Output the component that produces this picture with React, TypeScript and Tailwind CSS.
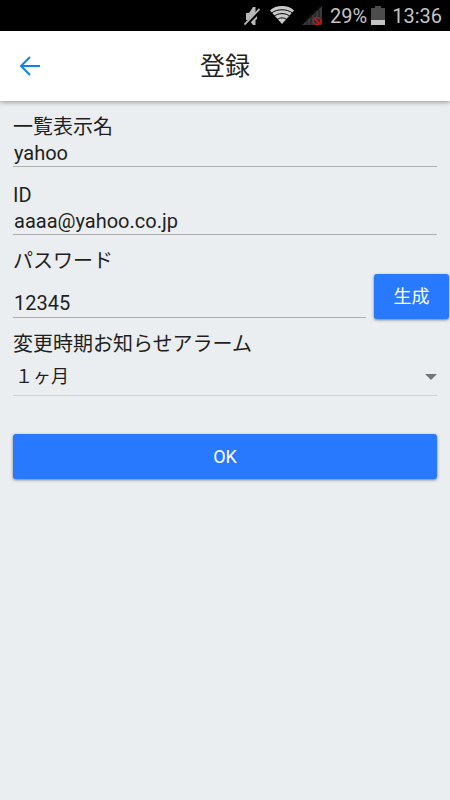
import { useState } from "react";

const alarmOptions = ["１ヶ月", "２ヶ月", "３ヶ月", "６ヶ月"];

function StatusBar() {
  return (
    <div className="flex h-[31px] items-center justify-end bg-black pr-2 text-[20px] leading-none text-[#c4c4c4]">
      <svg className="mr-2 h-5 w-[18px]" viewBox="0 0 18 20" aria-hidden="true">
        <path d="M2 7h3l4-6h2.500v5l1.500 2v5l-1.500 1v5H9l-4-5H2z" fill="#b8b8b8" />
        <path d="M1 19.500 17 3.500" stroke="#000" strokeWidth="3.500" />
        <path d="M0.500 18.500 15.500 3" stroke="#b8b8b8" strokeWidth="1.800" />
      </svg>
      <svg className="mr-2 h-5 w-6" viewBox="0 0 24 20" aria-hidden="true">
        <path d="M12 18 0 4.500C3 1.300 7 0 12 0s9 1.300 12 4.500z" fill="#cacaca" />
        <g fill="none" stroke="#000" strokeWidth="1">
          <path d="M1.500 7C7 2.700 17 2.700 22.500 7" />
          <path d="M4 10.300c4.500-3.600 11.500-3.600 16 0" />
          <path d="M7 13.700c2.800-2.400 7.200-2.400 10 0" />
        </g>
      </svg>
      <svg className="mr-2 h-5 w-5" viewBox="0 0 20 20" aria-hidden="true">
        <path d="M0 19 20 0v19z" fill="#3a3a3a" />
        <path d="M5 12v7M9 8v11M13 4v15M17 1v18" stroke="#1c1c1c" strokeWidth="1" />
        <circle cx="15" cy="15" r="3.700" fill="none" stroke="#c4161c" strokeWidth="1.300" />
        <path d="m12.500 12.500 5 5" stroke="#c4161c" strokeWidth="1.500" />
      </svg>
      <span>29%</span>
      <svg className="mr-[7px] ml-1 h-5 w-[14px]" viewBox="0 0 14 20" aria-hidden="true">
        <path d="M4 0h6v2h4v12H0V2h4z" fill="#4c4c4c" />
        <path d="M0 14h14v5H0z" fill="#c4c4c4" />
      </svg>
      <span>13:36</span>
    </div>
  );
}

function Header() {
  return (
    <header className="flex h-[70px] items-center bg-white px-4 shadow-[0_1px_5px_rgba(0,0,0,0.4)]">
      <button type="button" aria-label="戻る" className="flex h-7 w-7 items-center justify-center">
        <svg className="h-[22px] w-[22px]" viewBox="0 0 22 22" fill="none" stroke="#0b84ee" strokeWidth="2">
          <path d="M21 11H2M11 2l-9 9 9 9" />
        </svg>
      </button>
      <h1 className="mr-7 flex-1 pt-0.5 text-center text-[25px] text-[#1f1f21]">登録</h1>
    </header>
  );
}

type FieldProps = {
  id: string;
  label: string;
  value: string;
  onChange: (value: string) => void;
};

function Field({ id, label, value, onChange }: FieldProps) {
  return (
    <div className="mb-[14px]">
      <label htmlFor={id} className="block leading-7">
        {label}
      </label>
      <input
        id={id}
        value={value}
        onChange={(e) => onChange(e.target.value)}
        className="block h-[26px] w-full border-b border-[#afafaf] bg-transparent pb-px pl-px outline-none"
      />
    </div>
  );
}

export default function App() {
  const [name, setName] = useState("yahoo");
  const [userId, setUserId] = useState("aaaa@yahoo.co.jp");
  const [password, setPassword] = useState("12345");
  const [alarm, setAlarm] = useState(alarmOptions[0]);

  const generatePassword = () => {
    setPassword(Math.random().toString(36).slice(2, 10));
  };

  return (
    <div className="min-h-screen bg-[#ebeef1] font-[Roboto,'Noto_Sans_CJK_JP',sans-serif] text-[#1f1f21]">
      <StatusBar />
      <Header />
      <form className="px-[13px] pt-3 text-[20px]" onSubmit={(e) => e.preventDefault()}>
        <Field id="name" label="一覧表示名" value={name} onChange={setName} />
        <Field id="userId" label="ID" value={userId} onChange={setUserId} />

        <label htmlFor="password" className="block leading-[25px]">
          パスワード
        </label>
        <div className="-mr-3 flex items-start gap-2">
          <input
            id="password"
            value={password}
            onChange={(e) => setPassword(e.target.value)}
            className="mt-4 block h-7 min-w-0 flex-1 border-b border-[#afafaf] bg-transparent pb-0.5 pl-px outline-none"
          />
          <button
            type="button"
            onClick={generatePassword}
            className="h-[45px] w-[75px] shrink-0 rounded-[3px] bg-[#2979ff] text-[18px] text-white shadow-[0_1px_3px_rgba(0,0,0,0.5)]"
          >
            生成
          </button>
        </div>

        <label htmlFor="alarm" className="mt-[11px] block leading-7">
          変更時期お知らせアラーム
        </label>
        <div className="relative">
          <select
            id="alarm"
            value={alarm}
            onChange={(e) => setAlarm(e.target.value)}
            className="block h-[38px] w-full appearance-none border-b border-[#cdcfd1] bg-transparent pl-0.5 text-[18px] outline-none"
          >
            {alarmOptions.map((option) => (
              <option key={option}>{option}</option>
            ))}
          </select>
          <svg className="pointer-events-none absolute top-4 right-0 h-[6px] w-3" viewBox="0 0 12 6" aria-hidden="true">
            <path d="M0 0h12L6 6z" fill="#757575" />
          </svg>
        </div>

        <button
          type="submit"
          className="mt-[38px] h-[45px] w-full rounded-[3px] bg-[#2979ff] text-[18px] text-white shadow-[0_1px_3px_rgba(0,0,0,0.5)]"
        >
          OK
        </button>
      </form>
    </div>
  );
}
